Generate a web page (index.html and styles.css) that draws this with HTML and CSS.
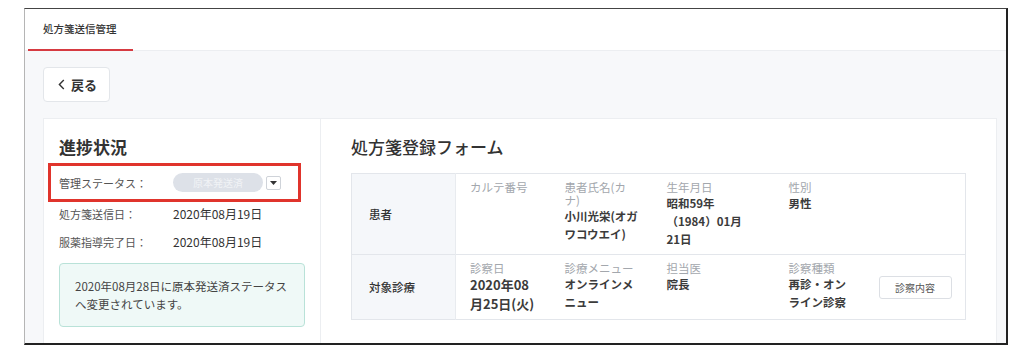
FILE: index.html
```html
<!DOCTYPE html>
<html lang="ja">
<head>
  <meta charset="UTF-8">
  <meta name="viewport" content="width=device-width, initial-scale=1.0">
  <title>処方箋送信管理</title>
  <link rel="stylesheet" href="styles.css">
</head>
<body>
  <div class="frame">
    <header class="tabs">
      <div class="tab active">処方箋送信管理</div>
    </header>
    <main class="content">
      <button class="back">
        <svg width="7" height="11" viewBox="0 0 7 11"><path d="M5.8 1L1.4 5.5L5.8 10" stroke="#333" stroke-width="1.4" fill="none"/></svg>
        戻る
      </button>
      <section class="card">
        <div class="progress">
          <h2>進捗状況</h2>
          <div class="status-row highlight">
            <span class="label">管理ステータス：</span>
            <span class="pill">原本発送済</span>
            <span class="toggle">
              <svg width="7" height="4" viewBox="0 0 7 4"><path d="M0 0H7L3.5 4Z" fill="#333"/></svg>
            </span>
          </div>
          <div class="status-row first">
            <span class="label">処方箋送信日：</span>
            <span class="value">2020年08月19日</span>
          </div>
          <div class="status-row">
            <span class="label">服薬指導完了日：</span>
            <span class="value">2020年08月19日</span>
          </div>
          <div class="notice">2020年08月28日に原本発送済ステータスへ変更されています。</div>
        </div>
        <div class="form">
          <h2>処方箋登録フォーム</h2>
          <table class="info-table">
            <tr>
              <th>患者</th>
              <td class="c1"><div class="field-label">カルテ番号</div></td>
              <td class="c2">
                <div class="field-label">患者氏名(カナ)</div>
                <div class="field-value">小川光栄(オガワコウエイ)</div>
              </td>
              <td class="c3">
                <div class="field-label">生年月日</div>
                <div class="field-value">昭和59年（1984）01月21日</div>
              </td>
              <td class="c4">
                <div class="field-label">性別</div>
                <div class="field-value">男性</div>
              </td>
              <td class="c5"></td>
            </tr>
            <tr>
              <th>対象診療</th>
              <td class="c1">
                <div class="field-label">診察日</div>
                <div class="field-value large">2020年08月25日(火)</div>
              </td>
              <td class="c2">
                <div class="field-label">診療メニュー</div>
                <div class="field-value">オンラインメニュー</div>
              </td>
              <td class="c3">
                <div class="field-label">担当医</div>
                <div class="field-value">院長</div>
              </td>
              <td class="c4">
                <div class="field-label">診察種類</div>
                <div class="field-value">再診・オンライン診察</div>
              </td>
              <td class="c5 action"><button class="detail-btn">診察内容</button></td>
            </tr>
          </table>
        </div>
      </section>
    </main>
  </div>
</body>
</html>
```

FILE: styles.css
```css
body {
  margin: 0;
  background: #fff;
  font-family: "Noto Sans CJK JP", "Noto Sans", sans-serif;
  color: #333;
}

.frame {
  margin: 8px 0 0 24px;
  width: 984px;
  height: 337px;
  box-sizing: border-box;
  border-top: 1px solid #444;
  border-left: 1px solid #b5b5b5;
  border-right: 2px solid #222;
  border-bottom: 2px solid #222;
  overflow: hidden;
  display: flex;
  flex-direction: column;
  background: #f7f8fa;
}

/* tab header */
.tabs {
  height: 41px;
  flex: none;
  display: flex;
  background: #fff;
  border-bottom: 1px solid #eceef1;
  padding-left: 3px;
}

.tab {
  width: 105px;
  box-sizing: border-box;
  padding: 0 0 0 15px;
  white-space: nowrap;
  line-height: 40px;
  font-size: 10.5px;
  font-weight: 500;
  color: #333;
}

.tab.active {
  border-bottom: 2px solid #d63a41;
  margin-bottom: -1px;
}

.content {
  flex: 1;
  display: flex;
  flex-direction: column;
  align-items: flex-start;
  padding: 16px 9px 0 18px;
  min-height: 0;
}

.back {
  flex: none;
  height: 35px;
  width: 67px;
  display: flex;
  align-items: center;
  gap: 6px;
  padding: 0 0 0 14px;
  background: #fff;
  border: 1px solid #e3e6ea;
  border-radius: 4px;
  font-family: inherit;
  font-size: 13px;
  font-weight: 700;
  color: #333;
}

.card {
  margin-top: 16px;
  align-self: stretch;
  flex: 1;
  min-height: 0;
  overflow: hidden;
  display: flex;
  background: #fff;
  border: 1px solid #eceef1;
  border-bottom: none;
}

h2 {
  margin: 0;
  font-size: 17px;
  line-height: 24px;
  font-weight: 700;
  color: #333;
}

/* left: progress */
.progress {
  width: 277px;
  flex: none;
  box-sizing: border-box;
  border-right: 1px solid #eceef1;
  padding: 16px 15px 0;
}

.progress h2 {
  margin-bottom: 4px;
}

.status-row {
  display: flex;
  align-items: center;
  line-height: 28px;
  font-size: 11px;
}

.status-row.first {
  margin-top: -2px;
}

.status-row .label {
  width: 114px;
  flex: none;
  color: #555;
}

.status-row .value {
  font-size: 12px;
  color: #333;
}

.status-row.highlight {
  height: 39px;
  width: 253px;
  box-sizing: border-box;
  margin-left: -11px;
  padding-left: 8px;
  border: 3px solid #e0342c;
}

.pill {
  width: 90px;
  height: 19px;
  border-radius: 10px;
  background: #dde1e8;
  color: #f1f3f6;
  font-size: 10px;
  line-height: 19px;
  text-align: center;
}

.toggle {
  margin-left: 3px;
  width: 15px;
  height: 14px;
  box-sizing: border-box;
  border: 1px solid #cfd3d9;
  border-radius: 2px;
  display: flex;
  align-items: center;
  justify-content: center;
  background: #fff;
}

.notice {
  margin-top: 7px;
  padding: 13px 15px;
  background: #eff9f7;
  border: 1px solid #b9e2d8;
  border-radius: 4px;
  font-size: 11.5px;
  line-height: 18px;
  color: #444;
}

/* right: form */
.form {
  flex: 1;
  padding: 16px 30px 0 30px;
}

.form h2 {
  font-weight: 500;
  margin-bottom: 14px;
}

.info-table {
  width: 100%;
  border-collapse: collapse;
  border: 1px solid #e3e6eb;
  table-layout: fixed;
}

.info-table tr + tr {
  border-top: 1px solid #e3e6eb;
}

.info-table th,
.info-table td {
  box-sizing: border-box;
}

.info-table th {
  width: 104px;
  padding-left: 17px;
  background: #f5f7fa;
  border-right: 1px solid #e8ebef;
  text-align: left;
  font-size: 11.5px;
  font-weight: 500;
  color: #333;
}

.info-table td {
  vertical-align: top;
  padding: 7px 14px 6px;
  font-size: 11.5px;
}

.info-table .c1 { width: 95px; }
.info-table .c2 { width: 102px; }
.info-table .c3 { width: 122px; padding-right: 28px; }
.info-table .c4 { width: 90px; }

.info-table td.action {
  vertical-align: middle;
}

.field-label {
  line-height: 13px;
  color: #a3a7ad;
}

.field-value {
  line-height: 18px;
  font-weight: 700;
  color: #3b3b3b;
}

.field-value.large {
  font-size: 13px;
  line-height: 19px;
}

.detail-btn {
  width: 73px;
  height: 23px;
  background: #fff;
  border: 1px solid #dcdfe4;
  border-radius: 3px;
  font-family: inherit;
  font-size: 10px;
  color: #555;
}
```
